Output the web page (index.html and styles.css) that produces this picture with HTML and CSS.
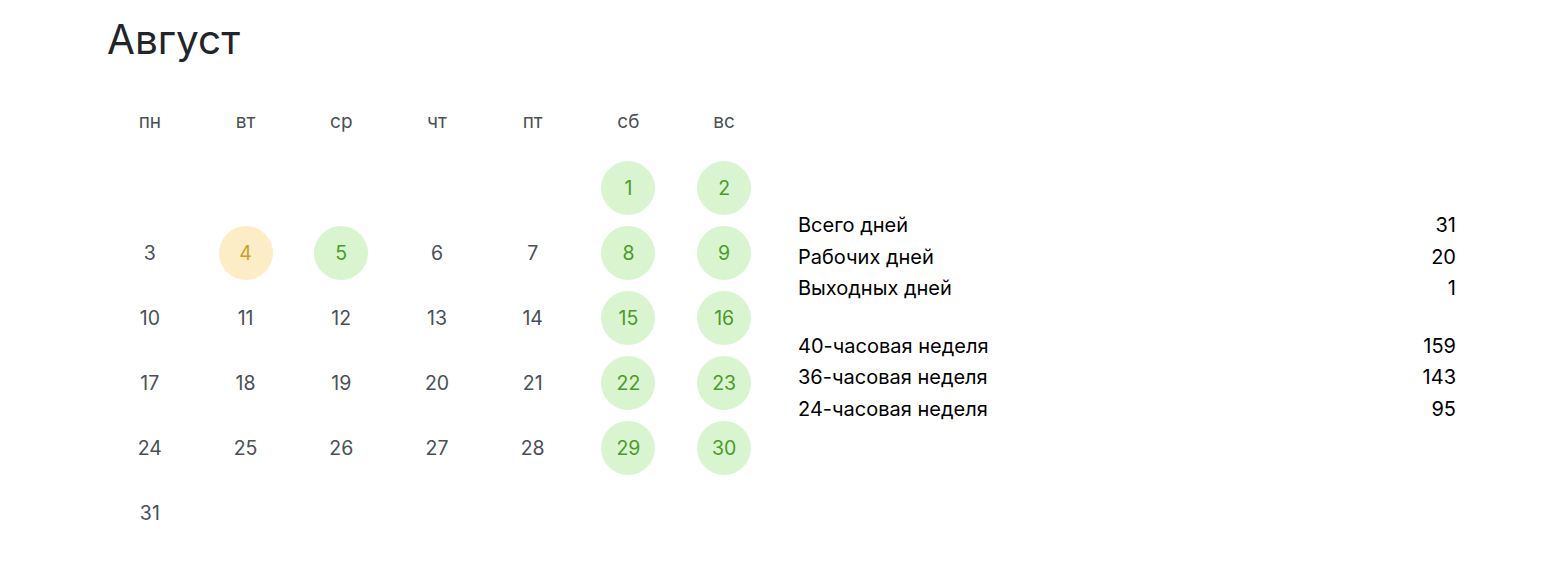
FILE: index.html
```html
<!DOCTYPE html>
<html lang="ru">
<head>
<meta charset="utf-8">
<title>Август</title>
<link rel="stylesheet" href="styles.css">
</head>
<body>
<main class="page">
  <h1 class="title">Август</h1>
  <div class="month">
    <div class="calendar">
      <div class="wd">пн</div><div class="wd">вт</div><div class="wd">ср</div><div class="wd">чт</div><div class="wd">пт</div><div class="wd">сб</div><div class="wd">вс</div>

      <div class="day"></div><div class="day"></div><div class="day"></div><div class="day"></div><div class="day"></div>
      <div class="day"><span class="num off">1</span></div><div class="day"><span class="num off">2</span></div>

      <div class="day"><span class="num">3</span></div><div class="day"><span class="num short">4</span></div><div class="day"><span class="num off">5</span></div><div class="day"><span class="num">6</span></div><div class="day"><span class="num">7</span></div>
      <div class="day"><span class="num off">8</span></div><div class="day"><span class="num off">9</span></div>

      <div class="day"><span class="num">10</span></div><div class="day"><span class="num">11</span></div><div class="day"><span class="num">12</span></div><div class="day"><span class="num">13</span></div><div class="day"><span class="num">14</span></div>
      <div class="day"><span class="num off">15</span></div><div class="day"><span class="num off">16</span></div>

      <div class="day"><span class="num">17</span></div><div class="day"><span class="num">18</span></div><div class="day"><span class="num">19</span></div><div class="day"><span class="num">20</span></div><div class="day"><span class="num">21</span></div>
      <div class="day"><span class="num off">22</span></div><div class="day"><span class="num off">23</span></div>

      <div class="day"><span class="num">24</span></div><div class="day"><span class="num">25</span></div><div class="day"><span class="num">26</span></div><div class="day"><span class="num">27</span></div><div class="day"><span class="num">28</span></div>
      <div class="day"><span class="num off">29</span></div><div class="day"><span class="num off">30</span></div>

      <div class="day"><span class="num">31</span></div>
    </div>

    <div class="stats">
      <div class="group">
        <div class="row"><span>Всего дней</span><span>31</span></div>
        <div class="row"><span>Рабочих дней</span><span>20</span></div>
        <div class="row"><span>Выходных дней</span><span>1</span></div>
      </div>
      <div class="group">
        <div class="row"><span>40-часовая неделя</span><span>159</span></div>
        <div class="row"><span>36-часовая неделя</span><span>143</span></div>
        <div class="row"><span>24-часовая неделя</span><span>95</span></div>
      </div>
    </div>
  </div>
</main>
</body>
</html>
```

FILE: styles.css
```css
html, body {
  margin: 0;
  padding: 0;
  background: #fff;
}

body {
  font-family: Inter, "Noto Sans", sans-serif;
  color: #212529;
}

.page {
  padding: 16px 0 0 102px;
}

.title {
  margin: 0 0 26px 5px;
  font-size: 40.5px;
  font-weight: 400;
  line-height: 48px;
  color: #212529;
}

.month {
  display: flex;
  align-items: center;
  gap: 26px;
}

.calendar {
  width: 670px;
  display: grid;
  grid-template-columns: repeat(7, 1fr);
  grid-auto-rows: 65px;
}

.wd,
.day {
  display: flex;
  align-items: center;
  justify-content: center;
  color: #495057;
}

.wd {
  font-size: 19px;
  padding-bottom: 2px;
}

.num {
  width: 54px;
  height: 54px;
  border-radius: 50%;
  display: flex;
  align-items: center;
  justify-content: center;
  font-size: 19.5px;
}

.num.off {
  background: #d9f5d0;
  color: #4c9a2a;
}

.num.short {
  background: #fdedc6;
  color: #c9a12a;
}

.stats {
  width: 658px;
  display: flex;
  flex-direction: column;
  gap: 26px;
  font-size: 20px;
  line-height: 31.5px;
  color: #000;
}

.row {
  display: flex;
  justify-content: space-between;
}
```
